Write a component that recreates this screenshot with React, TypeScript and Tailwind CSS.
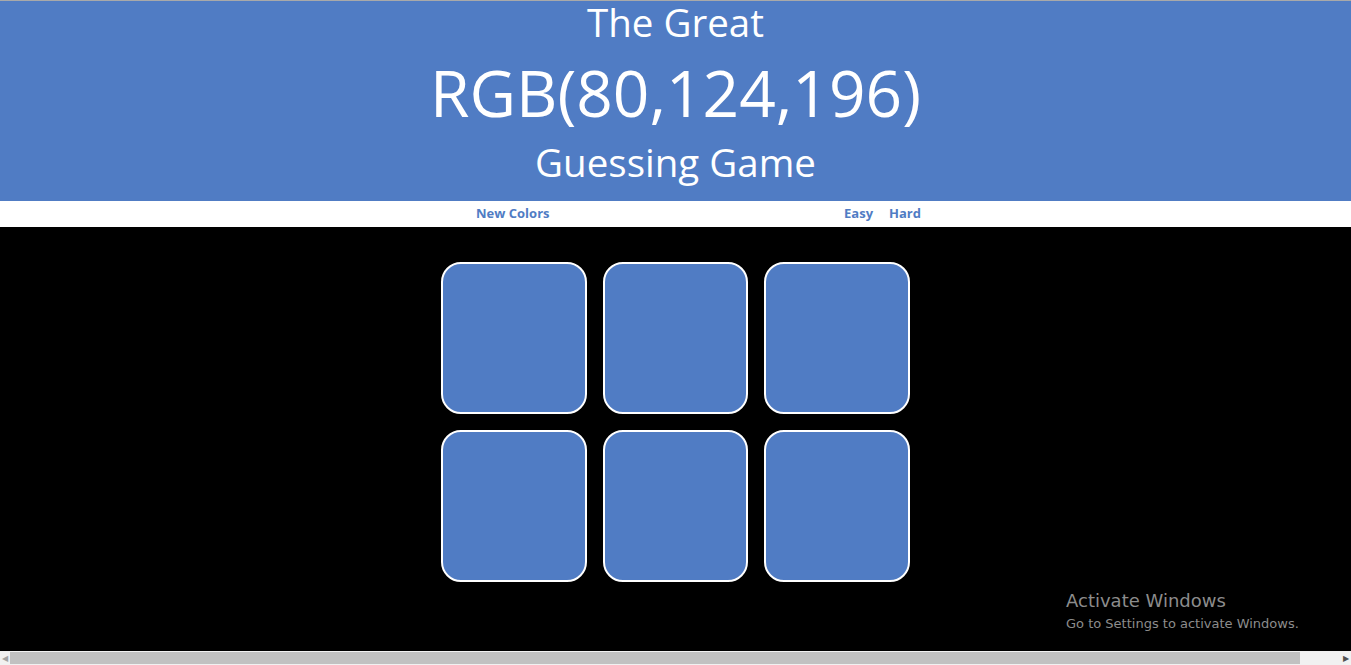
import React from 'react';

const squares = [0, 1, 2, 3, 4, 5];

export default function App() {
  return (
    <div className="h-[665px] w-[1351px] overflow-hidden bg-black font-['Open_Sans',sans-serif]">
      <div className="h-px bg-[#a9a9a9]" />

      {/* Header */}
      <div className="flex h-[200px] flex-col items-center bg-[#507cc4] text-white">
        <h1 className="text-[38.5px] leading-[43px]">The Great</h1>
        <div className="text-[64px] leading-[98px]">RGB(80,124,196)</div>
        <h1 className="text-[38.5px] leading-[41px]">Guessing Game</h1>
      </div>

      {/* Stripe */}
      <div className="flex h-[26px] items-center justify-center whitespace-nowrap bg-white pl-[46px] text-[13px] font-bold text-[#507cc4]">
        <button className="w-[71px] text-left">New Colors</button>
        <div className="w-[297px]" />
        <button>Easy</button>
        <button className="ml-[16px]">Hard</button>
      </div>

      {/* Board */}
      <div className="relative h-[424px] bg-black">
        <div className="mx-auto grid w-[469px] grid-cols-3 gap-x-[16px] gap-y-[16px] pt-[35px]">
          {squares.map((i) => (
            <div key={i} className="h-[152px] rounded-[20px] border-2 border-white bg-[#507cc4]" />
          ))}
        </div>

        <div className="absolute left-[1066px] top-[362px] font-['DejaVu_Sans',sans-serif] text-[#8c8c8c]">
          <div className="text-[18px] leading-[24px]">Activate Windows</div>
          <div className="mt-[2px] text-[13px] leading-[18px]">Go to Settings to activate Windows.</div>
        </div>
      </div>

      {/* Scrollbar */}
      <div className="flex h-[14px] items-center bg-[#f1f1f1]">
        <div className="flex w-[10px] justify-center text-[8px] text-[#a3a3a3]">◀</div>
        <div className="h-[12px] w-[1290px] bg-[#c1c1c1]" />
        <div className="flex-1" />
        <div className="flex w-[10px] justify-center text-[8px] text-[#505050]">▶</div>
      </div>
    </div>
  );
}
